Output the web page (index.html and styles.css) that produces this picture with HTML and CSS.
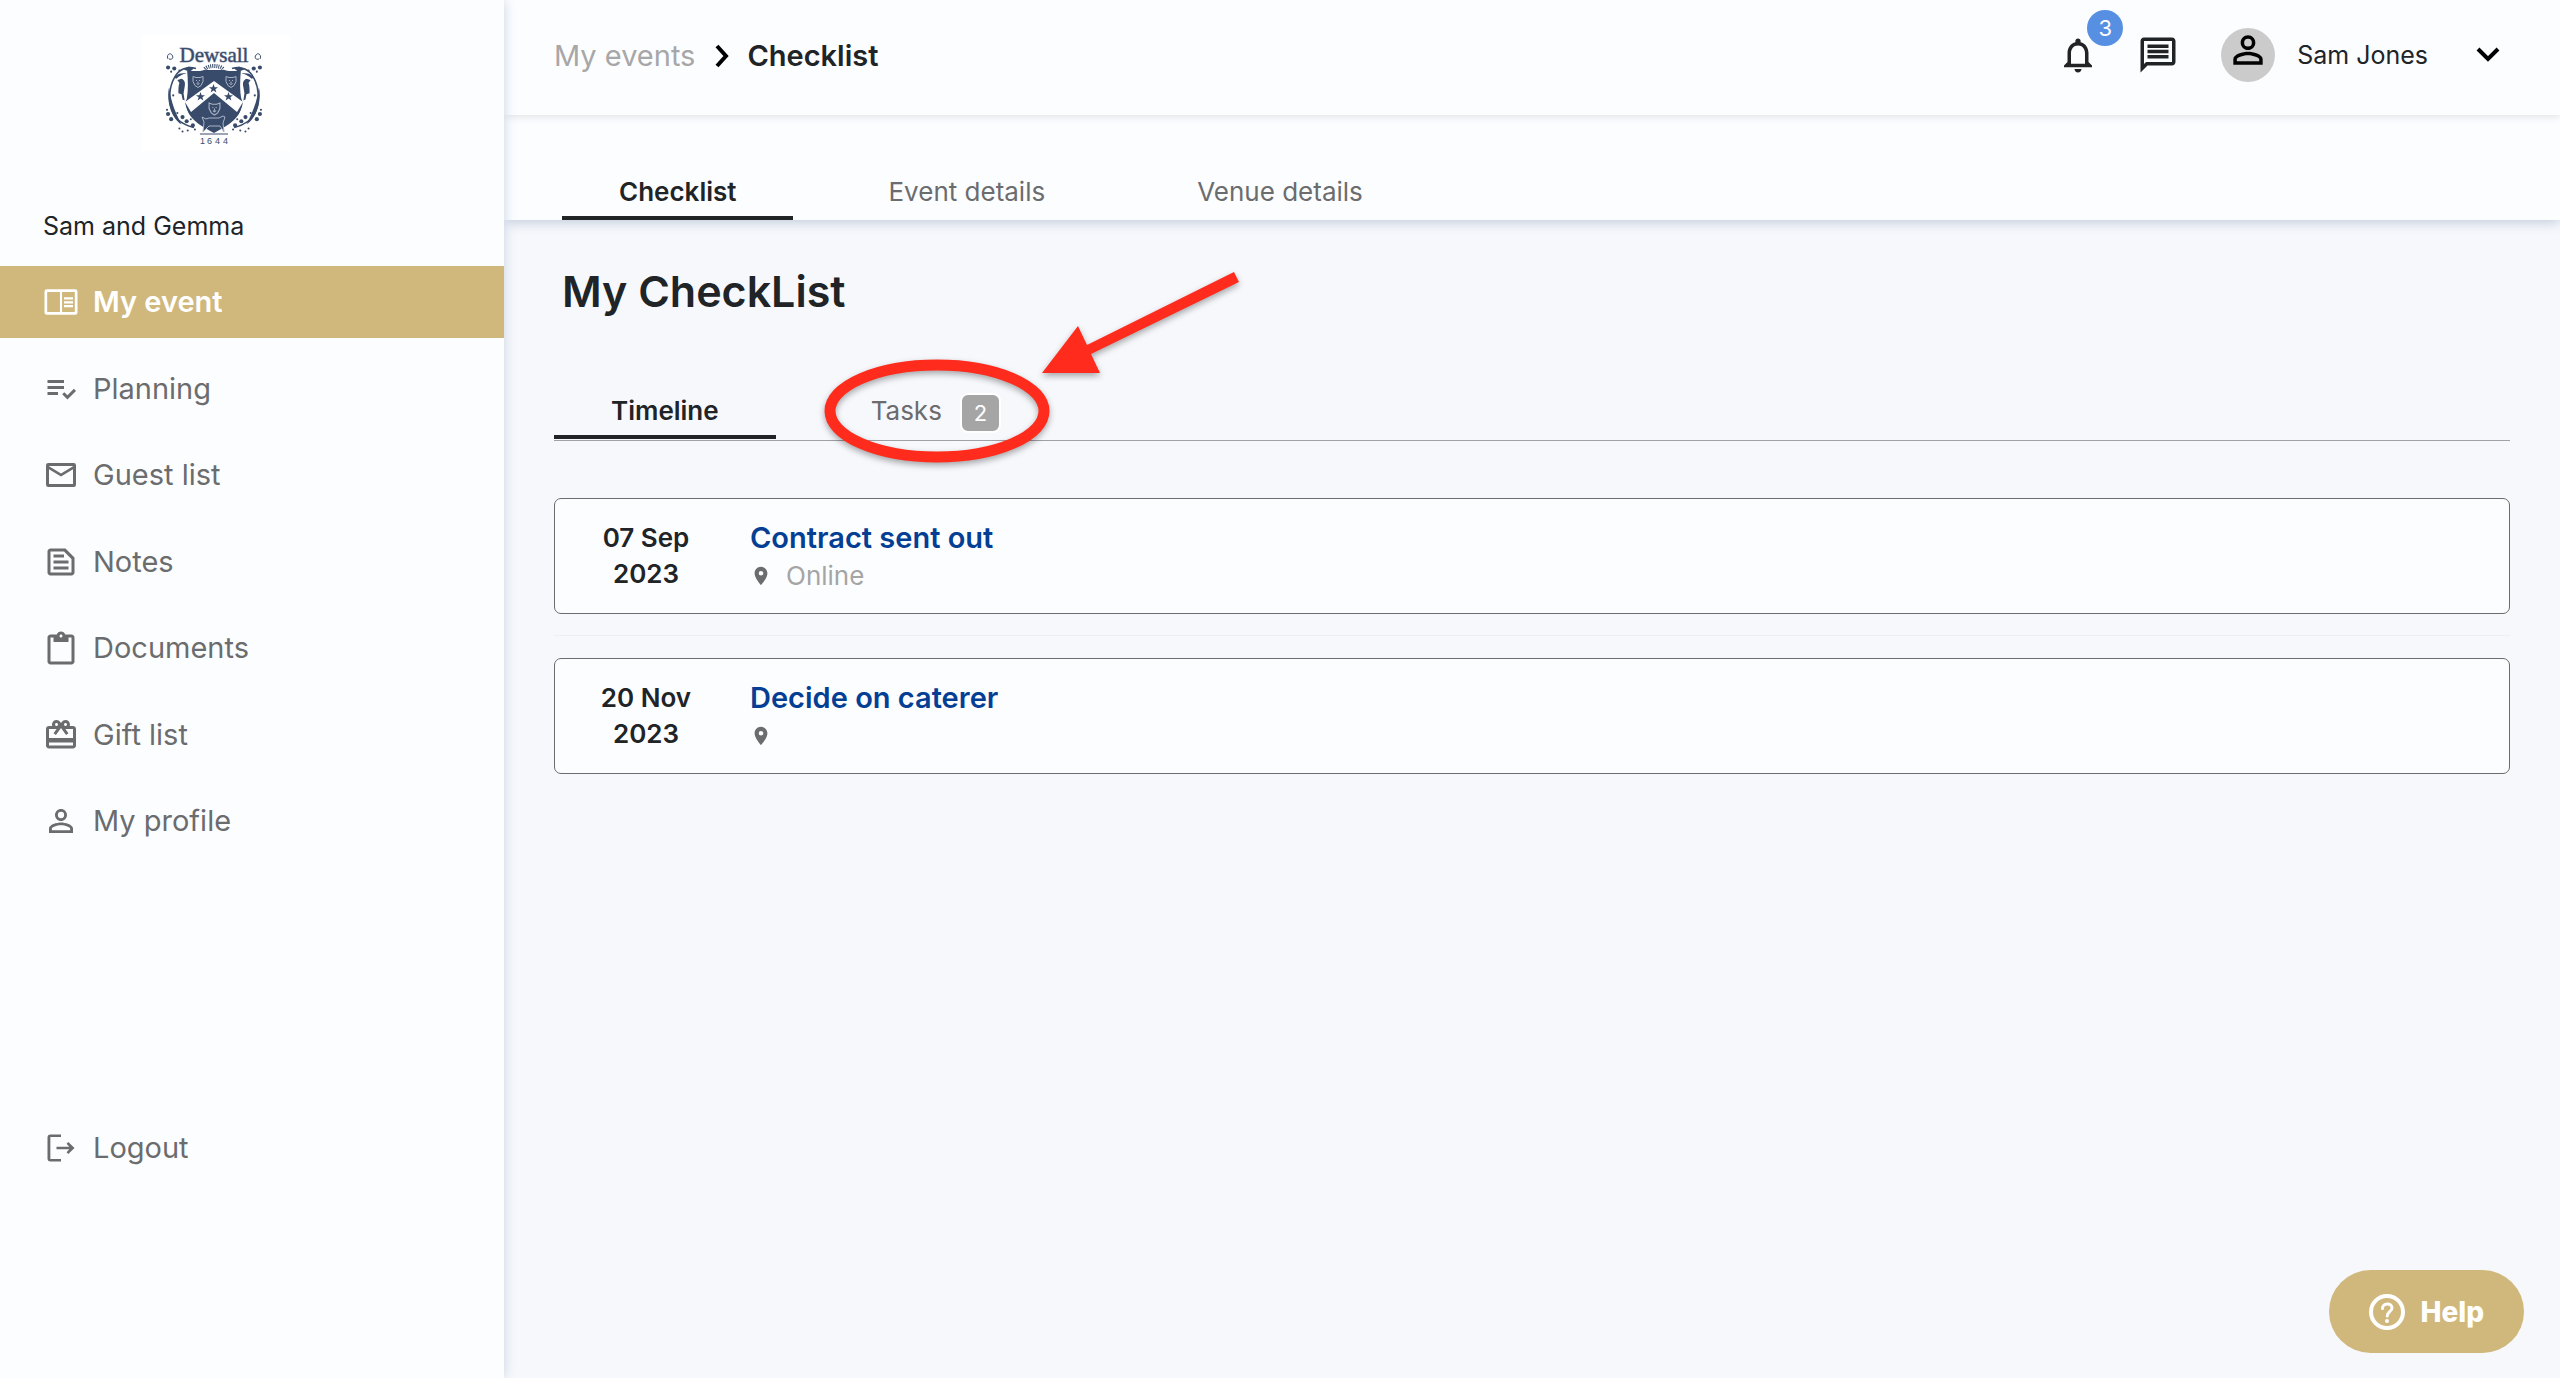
FILE: index.html
```html
<!DOCTYPE html>
<html lang="en">
<head>
<meta charset="utf-8">
<title>My CheckList</title>
<link rel="stylesheet" href="styles.css">
</head>
<body>
<svg class="defs" aria-hidden="true">
  <defs>
    <symbol id="pin" viewBox="0 0 24 24"><path d="M12 2C8.13 2 5 5.13 5 9c0 5.25 7 13 7 13s7-7.75 7-13c0-3.87-3.13-7-7-7zm0 9.500a2.500 2.500 0 1 1 0-5 2.500 2.500 0 0 1 0 5z"/></symbol>
    <symbol id="person" viewBox="0 0 24 24"><path d="M12 5.900a2.100 2.100 0 1 1 0 4.200 2.100 2.100 0 0 1 0-4.200m0 9c2.970 0 6.100 1.460 6.100 2.100v1.100H5.900V17c0-.64 3.130-2.100 6.100-2.100M12 4C9.790 4 8 5.790 8 8s1.790 4 4 4 4-1.790 4-4-1.790-4-4-4zm0 9c-2.670 0-8 1.340-8 4v3h16v-3c0-2.660-5.330-4-8-4z"/></symbol>
    <symbol id="sprig" viewBox="0 0 30 66">
      <path d="M29 4C20 1 12 5 8 13C3 22 2 36 6 45C9 53 15 58 27 61" fill="none" stroke="currentColor" stroke-width="1.500"/>
      <path d="M3 22C0 34 5 52 15 58C10 48 5 38 3 22z"/>
      <path d="M15 14c3 1 4 4 3 8l-1 6 1 7-2-1-1-5-3-1c0-4 0-8 1-10l-2-3z"/>
      <path d="M22 2l5 2-4 3-6-2zM8 13c3-4 7-5 12-4-4 0-7 2-10 5z"/>
      <circle cx="2" cy="3" r="2"/><circle cx="8" cy="4" r="2"/><circle cx="5" cy="7" r="1"/><circle cx="13" cy="6" r="1"/><circle cx="13" cy="10" r="1"/>
      <circle cx="1" cy="44" r="1"/><circle cx="2" cy="48" r="2"/><circle cx="5" cy="53" r="2"/><circle cx="11" cy="47" r="1"/>
      <circle cx="16" cy="51" r="2"/><circle cx="13" cy="62" r="1"/><circle cx="16" cy="65" r="1"/><circle cx="20" cy="55" r="2"/><circle cx="21" cy="64" r="1"/><circle cx="26" cy="59" r="2"/><circle cx="28" cy="63" r="1"/><circle cx="24" cy="53" r="1"/><circle cx="7" cy="30" r="1"/>
    </symbol>
    <symbol id="leopard" viewBox="0 0 12 12"><path d="M1 1l3 1h4l3-1v5L9 10l-3 2-3-2-2-4zM4 5h1M7 5h1M4.500 8L6 9l1.500-1M6 6v2" fill="none" stroke="#aab3c6" stroke-width="1"/></symbol>
    <symbol id="star" viewBox="0 0 10 10"><path d="M5 0l1.300 3.500H10L7.100 5.800 8.200 9.500 5 7.300 1.800 9.500l1.100-3.700L0 3.500h3.700z"/></symbol>
  </defs>
</svg>
<div class="app">
  <aside class="sidebar">
    <a class="logo" href="#" aria-label="Dewsall 1644">
      <svg viewBox="0 0 148 116">
        <text class="logo-name" x="72" y="27" text-anchor="middle">Dewsall</text>
        <path d="M26 24c-2-4 2-7 4-4s0 5-3 4M118 24c2-4-2-7-4-4s0 5 3 4" fill="none" stroke="currentColor" stroke-width="1"/>
        <path d="M63 34c3-4 15-4 18 0" fill="none" stroke="currentColor" stroke-width="4" stroke-dasharray="1 1"/>
        <path d="M45 36h13c2 0 4-2 7-1h15c3-1 4 1 7 1h12v20c0 5 1 8 2 11-2 16-14 23-29 31-15-8-27-15-29-31 2-3 2-6 2-11z"/>
        <path d="M72 46l29 21-6 10-23-19-23 19-6-10z" fill="#fff"/>
        <path d="M44 34c1 10 1 22 0 28l-2 7c4 18 14 24 30 31 16-7 26-13 30-31l-2-7c-1-6-1-18 0-28" fill="none" stroke="#fff" stroke-width="2"/>
        <use href="#leopard" x="50" y="40" width="12" height="13"/><use href="#leopard" x="83" y="40" width="12" height="13"/><use href="#leopard" x="66" y="66" width="13" height="15"/>
        <use href="#star" x="67" y="49" width="9" height="9"/><use href="#star" x="54" y="57" width="9" height="9"/><use href="#star" x="82" y="57" width="9" height="9"/>
        <use href="#sprig" x="24" y="29" width="31" height="69"/>
        <use href="#sprig" x="24" y="29" width="31" height="69" transform="translate(144 0) scale(-1 1)"/>
        <path d="M58 99h28" stroke="currentColor" stroke-width="1"/>
        <path d="M61 97l1-10-2-5 4 2 3-1h10l4-2 2 1-2 6 1 9-4-6H67z" stroke="#aab3c6" stroke-width="1"/>
        <text class="logo-year" x="58 65 73 81" y="109">1644</text>
      </svg>
    </a>
    <p class="couple">Sam and Gemma</p>
    <nav class="nav">
      <a class="nav-item active" href="#"><svg viewBox="0 0 24 24"><path fill-rule="evenodd" d="M2.500 3.500h19A1.500 1.500 0 0 1 23 5v14a1.500 1.500 0 0 1-1.500 1.500h-19A1.500 1.500 0 0 1 1 19V5a1.500 1.500 0 0 1 1.500-1.500zM2.800 5.300v13.400h8.500V5.300zm9.900 0v13.400h8.500V5.300zM14 8.900h6v1.500h-6zm0 2.600h6V13h-6zm0 2.500h6v1.500h-6z"/></svg>My event</a>
      <a class="nav-item" href="#"><svg viewBox="0 0 24 24"><path d="M3 6h11v2H3zm0 4h11v2H3zm0 4h7v2H3zm17.600-2.100L16.300 16.200l-2.100-2.100-1.400 1.400 3.500 3.500 5.700-5.700z"/></svg>Planning</a>
      <a class="nav-item" href="#"><svg viewBox="0 0 24 24"><path fill-rule="evenodd" d="M3.500 4h17A1.500 1.500 0 0 1 22 5.500v13a1.500 1.500 0 0 1-1.500 1.500h-17A1.500 1.500 0 0 1 2 18.500v-13A1.500 1.500 0 0 1 3.500 4zM4 8.200V18h16V8.200l-8 4.800zM4 6v.2l8 4.800 8-4.800V6z"/></svg>Guest list</a>
      <a class="nav-item" href="#"><svg viewBox="0 0 24 24"><path fill-rule="evenodd" d="M15 3H5c-1.100 0-2 .9-2 2v14c0 1.100.9 2 2 2h14c1.100 0 2-.9 2-2V9zM5 19V5h9l5 5v9zM7 7h7v2H7zm0 4h10v2H7zm0 4h10v2H7z"/></svg>Notes</a>
      <a class="nav-item" href="#"><svg viewBox="0 0 24 24"><path fill-rule="evenodd" d="M19 3h-4.180C14.400 1.840 13.300 1 12 1s-2.400.84-2.820 2H5c-1.100 0-2 .9-2 2v16c0 1.100.9 2 2 2h14c1.100 0 2-.9 2-2V5c0-1.100-.9-2-2-2zm-7 0c.55 0 1 .45 1 1s-.45 1-1 1-1-.45-1-1 .45-1 1-1zm7 18H5V5h2v3h10V5h2z"/></svg>Documents</a>
      <a class="nav-item" href="#"><svg viewBox="0 0 24 24"><path d="M20 6h-2.180c.11-.31.18-.65.18-1 0-1.660-1.340-3-3-3-1.050 0-1.960.54-2.500 1.350l-.5.670-.5-.68C10.960 2.540 10.050 2 9 2 7.340 2 6 3.340 6 5c0 .35.070.69.18 1H4c-1.110 0-1.990.89-1.990 2L2 19c0 1.110.89 2 2 2h16c1.110 0 2-.89 2-2V8c0-1.110-.89-2-2-2zm-5-2c.55 0 1 .45 1 1s-.45 1-1 1-1-.45-1-1 .45-1 1-1zM9 4c.55 0 1 .45 1 1s-.45 1-1 1-1-.45-1-1 .45-1 1-1zm11 15H4v-2h16v2zm0-5H4V8h5.080L7 10.830 8.620 12 12 7.400l3.380 4.600L17 10.830 14.920 8H20v6z"/></svg>Gift list</a>
      <a class="nav-item" href="#"><svg viewBox="0 0 24 24"><use href="#person"/></svg>My profile</a>
    </nav>
    <a class="nav-item logout" href="#"><svg viewBox="0 0 24 24"><path d="M12 3H5a2 2 0 0 0-2 2v14a2 2 0 0 0 2 2h7v-1.700H4.900V4.700H12zM16.900 8l-1.200 1.200 1.800 1.900H9v1.800h8.500l-1.800 1.900 1.200 1.200 4.100-4z"/></svg>Logout</a>
  </aside>

  <main class="main">
    <header class="topbar">
      <nav class="crumbs" aria-label="Breadcrumb">
        <a href="#">My events</a>
        <svg viewBox="0 0 14 24"><path d="M2 2l9 10-9 10" fill="none" stroke="currentColor" stroke-width="4"/></svg>
        <strong>Checklist</strong>
      </nav>
      <div class="tools">
        <button class="icon-button" type="button" aria-label="Notifications">
          <svg viewBox="0 0 24 24"><path d="M12 22c1.100 0 2-.9 2-2h-4c0 1.100.9 2 2 2zm6-6v-5c0-3.070-1.630-5.640-4.500-6.320V4c0-.83-.67-1.500-1.500-1.500s-1.500.67-1.500 1.500v.68C7.640 5.360 6 7.920 6 11v5l-2 2v1h16v-1zm-2 1H8v-6c0-2.480 1.510-4.500 4-4.500s4 2.020 4 4.500z"/></svg>
          <span class="count">3</span>
        </button>
        <button class="icon-button" type="button" aria-label="Messages">
          <svg viewBox="0 0 24 24"><path fill-rule="evenodd" d="M20 2H4c-1.100 0-1.990.9-1.990 2L2 22l4-4h14c1.100 0 2-.9 2-2V4c0-1.100-.9-2-2-2zm0 14H5.200L4 17.200V4h16zM6 12h12v2H6zm0-3h12v2H6zm0-3h12v2H6z"/></svg>
        </button>
        <button class="account" type="button">
          <span class="avatar"><svg viewBox="0 0 24 24"><use href="#person"/></svg></span>
          <span>Sam Jones</span>
          <svg class="chevron" viewBox="0 0 24 16"><path d="M2 2l10 10L22 2" fill="none" stroke="currentColor" stroke-width="4"/></svg>
        </button>
      </div>
    </header>

    <nav class="tabs">
      <a class="tab active" href="#">Checklist</a>
      <a class="tab" href="#">Event details</a>
      <a class="tab" href="#">Venue details</a>
    </nav>

    <section class="content">
      <h1>My CheckList</h1>
      <nav class="subtabs">
        <a class="subtab active" href="#">Timeline</a>
        <a class="subtab" href="#">Tasks <span class="badge">2</span>
          <svg class="callout" viewBox="0 0 430 210" aria-hidden="true">
            <ellipse cx="117" cy="151" rx="107" ry="46" fill="none" stroke="#ff2b1c" stroke-width="11"/>
            <path d="M222 113l36-47 9 19L414 12l5 10L271 94l9 19z" fill="#ff2b1c"/>
          </svg>
        </a>
      </nav>
      <ul class="timeline">
        <li>
          <article class="card">
            <time datetime="2023-09-07">07 Sep 2023</time>
            <div class="info">
              <h2><a href="#">Contract sent out</a></h2>
              <p><svg viewBox="0 0 24 24"><use href="#pin"/></svg>Online</p>
            </div>
          </article>
        </li>
        <li>
          <article class="card">
            <time datetime="2023-11-20">20 Nov 2023</time>
            <div class="info">
              <h2><a href="#">Decide on caterer</a></h2>
              <p><svg viewBox="0 0 24 24"><use href="#pin"/></svg></p>
            </div>
          </article>
        </li>
      </ul>
    </section>
  </main>
</div>
<button class="help" type="button">
  <svg viewBox="0 0 36 36"><circle cx="18" cy="18" r="16" fill="none" stroke="currentColor" stroke-width="4"/><path d="M13.500 14.500c0-6 9.500-6 9.500-.5 0 3.500-4.800 4-4.800 8" fill="none" stroke="currentColor" stroke-width="3" stroke-linecap="round"/><circle cx="18" cy="27" r="2" fill="currentColor"/></svg>
  Help
</button>
</body>
</html>
```
FILE: styles.css
```css
* { box-sizing: border-box; }

body {
  margin: 0;
  font-family: Inter, "Liberation Sans", sans-serif;
  font-size: 26px;
  font-weight: 400;
  line-height: 36px;
  color: #212427;
  background: #f7f8fc;
}

h1, h2, p, ul { margin: 0; padding: 0; font-weight: inherit; }
ul { list-style: none; }
a { color: inherit; text-decoration: none; }
button { border: 0; padding: 0; background: none; font: inherit; color: inherit; }
svg { display: block; flex: none; fill: currentColor; }
.defs { position: absolute; width: 0; height: 0; }

.app { display: flex; min-height: 100vh; }

/* Sidebar */
.sidebar {
  position: relative;
  z-index: 2;
  flex: none;
  width: 504px;
  padding-top: 35px;
  background: #fcfdff;
  box-shadow: 0 0 12px #c9d4e2;
}
.logo { display: block; width: 148px; margin-left: 142px; background: #fff; color: #394b6b; }
.logo-name { font: 21px "Liberation Serif", serif; stroke: currentColor; stroke-width: 1px; stroke-opacity: 0.5; }
.logo-year { font: 9px "Liberation Sans", sans-serif; }
.couple { margin: 57px 43px 22px; font-size: 25px; }
.nav { display: flex; flex-direction: column; justify-content: space-between; min-height: 591px; }
.nav-item {
  display: flex;
  align-items: center;
  gap: 14px;
  height: 72px;
  padding-left: 43px;
  font-size: 29px;
  color: #6b6c6e;
}
.nav-item svg { width: 36px; height: 36px; }
.nav-item.active { background: #d0b87c; color: #fff; font-weight: 600; }
.logout { margin-top: 255px; }

/* Top bar */
.main { flex: 1; min-width: 0; }
.topbar {
  position: relative;
  z-index: 1;
  display: flex;
  justify-content: space-between;
  height: 115px;
  padding: 28px 60px 0 50px;
  background: #fcfdff;
  box-shadow: 0 1px 8px #dcdde0;
}
.crumbs { display: flex; align-items: center; height: 56px; font-size: 29px; }
.crumbs a { color: #a7a7a8; }
.crumbs strong { font-weight: 600; }
.crumbs svg { width: 14px; height: 24px; margin: 0 18px 0 20px; color: #000; }
.tools { display: flex; align-items: center; height: 54px; }
.icon-button { position: relative; margin-right: 38px; }
.icon-button svg { width: 42px; height: 42px; }
.count {
  position: absolute;
  left: 30px;
  top: -24px;
  width: 36px;
  height: 36px;
  border-radius: 50%;
  background: #578fe3;
  color: #fff;
  font-size: 22px;
}
.account { display: flex; align-items: center; gap: 22px; margin-left: 4px; font-size: 25px; }
.avatar { width: 54px; height: 54px; padding: 0 5px; border-radius: 50%; background: #cbcbcb; color: #000; }
.avatar svg { width: 44px; height: 44px; }
.chevron { width: 24px; height: 16px; margin-left: 26px; color: #000; }

/* Section tabs */
.tabs {
  display: flex;
  align-items: flex-end;
  gap: 38px;
  height: 105px;
  padding-left: 58px;
  background: #fcfdff;
  box-shadow: 0 2px 12px #bcc8d8;
}
.tab {
  padding: 0 57px 6px;
  border-bottom: 4px solid transparent;
  color: #6b6c6e;
}
.tab.active, .subtab.active { border-color: #212427; color: #212427; font-weight: 600; }

/* Checklist */
.content { padding: 46px 50px 0; }
h1 { padding-left: 8px; font-size: 43px; line-height: 50px; font-weight: 600; }
.subtabs { display: flex; gap: 38px; height: 125px; align-items: flex-end; border-bottom: 1px solid #a0a1a4; padding-bottom: 1px; }
.subtab {
  position: relative;
  display: flex;
  gap: 18px;
  padding: 0 57px 6px;
  border-bottom: 4px solid transparent;
  color: #6b6c6e;
}
.badge {
  width: 41px;
  height: 40px;
  margin: 0 0 -4px;
  border: 2px solid #fff;
  border-radius: 8px;
  background: #a5a5a5;
  color: #fff;
  font-size: 22px;
  text-align: center;
}
.callout {
  position: absolute;
  left: 6px;
  top: -133px;
  width: 430px;
  height: 210px;
  filter: drop-shadow(0 3px 3px #00000055);
}
.timeline { padding-top: 57px; }
.timeline li + li { margin-top: 21px; padding-top: 22px; border-top: 1px solid #eeeff2; }
.card {
  display: flex;
  height: 116px;
  padding-top: 21px;
  background: #fcfdff;
  border: 1px solid #6b6c6e;
  border-radius: 7px;
}
time { width: 182px; padding: 0 40px; font-weight: 600; text-align: center; }
.info { padding-left: 13px; }
.info h2 { font-size: 29px; font-weight: 600; color: #053f94; }
.info p { display: flex; align-items: center; gap: 14px; height: 40px; color: #a5a5a5; }
.info svg { width: 22px; height: 22px; color: #6b6c6e; }

.help {
  position: fixed;
  right: 36px;
  bottom: 25px;
  display: flex;
  align-items: center;
  gap: 15px;
  height: 83px;
  padding: 0 40px;
  border-radius: 42px;
  background: #d0b87c;
  color: #fff;
  font-size: 28px;
  font-weight: 800;
}
.help svg { width: 36px; height: 36px; }
```
